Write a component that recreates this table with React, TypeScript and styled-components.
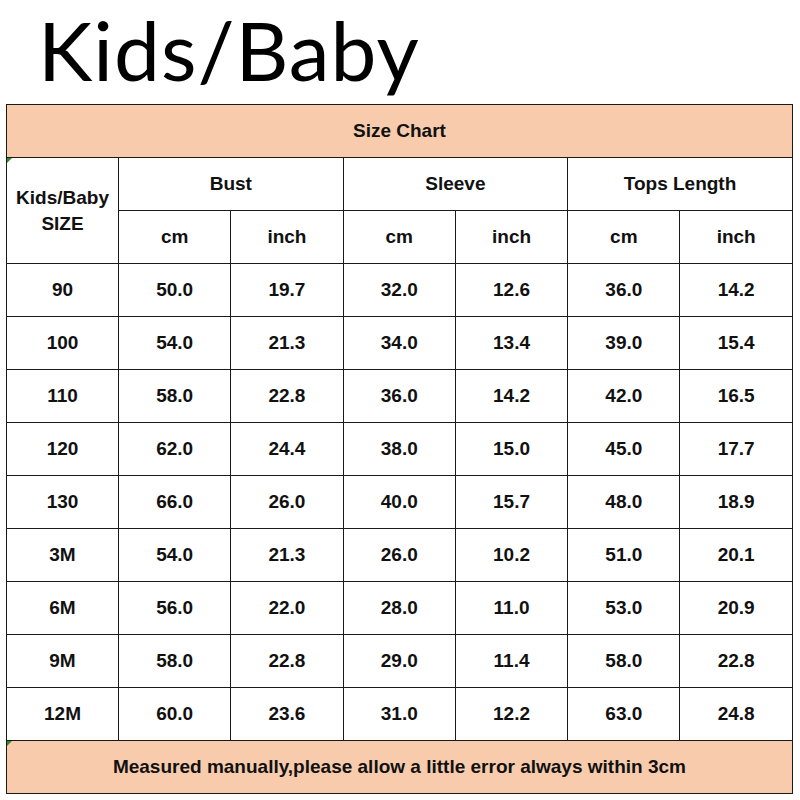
import React from "react";
import styled, { createGlobalStyle } from "styled-components";

const Global = createGlobalStyle`
  html, body { margin: 0; padding: 0; background: #fff; }
  body { width: 800px; height: 800px; overflow: hidden; }
`;

const Page = styled.div`
  width: 800px;
  height: 800px;
  background: #fff;
  display: flex;
  flex-direction: column;
  padding-left: 6px;
  box-sizing: border-box;
`;

const Title = styled.h1`
  margin: 0;
  height: 104px;
  padding: 0 0 0 32px;
  font-family: Lato, "Open Sans", sans-serif;
  font-weight: 400;
  font-size: 82px;
  letter-spacing: 1px;
  line-height: 98px;
  color: #000;
  box-sizing: border-box;
`;

const Table = styled.table`
  border-collapse: collapse;
  width: 786px;
  table-layout: fixed;
  font-family: "Liberation Sans", Arial, sans-serif;
  font-weight: 700;
  font-size: 19px;
  color: #111;
`;

const Cell = styled.td<{ $band?: boolean; $mark?: boolean }>`
  position: relative;
  height: 52px;
  padding: 0;
  border: 1px solid #1a1a1a;
  text-align: center;
  vertical-align: middle;
  background: ${(p) => (p.$band ? "#F8CBAD" : "#fff")};
  &::before {
    content: "";
    display: ${(p) => (p.$mark ? "block" : "none")};
    position: absolute;
    left: 0;
    top: 0;
    width: 0;
    height: 0;
    border-top: 5px solid #2e8b2e;
    border-right: 5px solid transparent;
  }
`;

const SizeLabel = styled.div`
  line-height: 26px;
`;

const rows: string[][] = [
  ["90", "50.0", "19.7", "32.0", "12.6", "36.0", "14.2"],
  ["100", "54.0", "21.3", "34.0", "13.4", "39.0", "15.4"],
  ["110", "58.0", "22.8", "36.0", "14.2", "42.0", "16.5"],
  ["120", "62.0", "24.4", "38.0", "15.0", "45.0", "17.7"],
  ["130", "66.0", "26.0", "40.0", "15.7", "48.0", "18.9"],
  ["3M", "54.0", "21.3", "26.0", "10.2", "51.0", "20.1"],
  ["6M", "56.0", "22.0", "28.0", "11.0", "53.0", "20.9"],
  ["9M", "58.0", "22.8", "29.0", "11.4", "58.0", "22.8"],
  ["12M", "60.0", "23.6", "31.0", "12.2", "63.0", "24.8"],
];

export default function App() {
  return (
    <>
      <Global />
      <Page>
        <Title>Kids/Baby</Title>
        <Table>
          <colgroup>
            {Array.from({ length: 7 }).map((_, i) => (
              <col key={i} style={{ width: i === 0 ? "112px" : "112.3px" }} />
            ))}
          </colgroup>
          <tbody>
            <tr>
              <Cell $band colSpan={7}>Size Chart</Cell>
            </tr>
            <tr>
              <Cell rowSpan={2} $mark>
                <SizeLabel>
                  Kids/Baby
                  <br />
                  SIZE
                </SizeLabel>
              </Cell>
              <Cell colSpan={2}>Bust</Cell>
              <Cell colSpan={2}>Sleeve</Cell>
              <Cell colSpan={2}>Tops Length</Cell>
            </tr>
            <tr>
              {["cm", "inch", "cm", "inch", "cm", "inch"].map((u, i) => (
                <Cell key={i}>{u}</Cell>
              ))}
            </tr>
            {rows.map((r) => (
              <tr key={r[0]}>
                {r.map((v, i) => (
                  <Cell key={i}>{v}</Cell>
                ))}
              </tr>
            ))}
            <tr>
              <Cell $band $mark colSpan={7}>
                Measured manually,please allow a little error always within 3cm
              </Cell>
            </tr>
          </tbody>
        </Table>
      </Page>
    </>
  );
}
